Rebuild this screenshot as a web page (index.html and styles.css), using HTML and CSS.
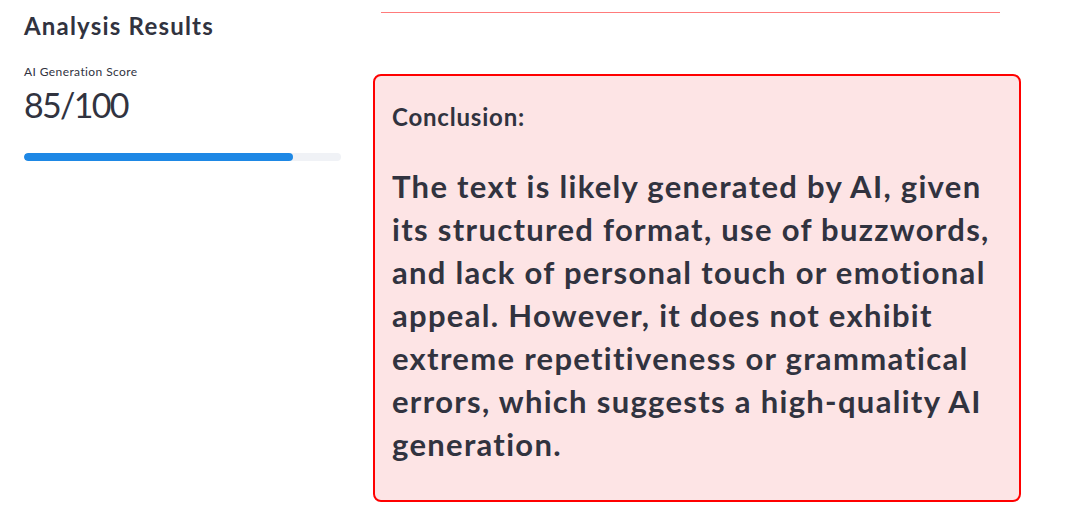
FILE: index.html
```html
<!DOCTYPE html>
<html>
<head>
    <title>Analysis Results</title>
    <meta name="viewport" content="width=device-width, initial-scale=1.0">
    <link rel="stylesheet" href="styles.css">
</head>
<body>
    <div class="columns">
        <!-- Left column: score -->
        <div class="col-left">
            <h3>Analysis Results</h3>
            <div class="metric-label">AI Generation Score</div>
            <div class="metric-value">85/100</div>
            <div class="progress">
                <div class="progress-bar" style="width: 85%"></div>
            </div>
        </div>

        <!-- Right column: conclusion -->
        <div class="col-right">
            <div class="divider"></div>
            <div class="conclusion">
                <h4>Conclusion:</h4>
                <p>The text is likely generated by AI, given its structured format, use of buzzwords, and lack of personal touch or emotional appeal. However, it does not exhibit extreme repetitiveness or grammatical errors, which suggests a high-quality AI generation.</p>
            </div>
        </div>
    </div>
</body>
</html>
```

FILE: styles.css
```css
body {
    margin: 0;
    background-color: #fff;
    color: #31333f;
    font-family: Lato, "Noto Sans", sans-serif;
}

.columns {
    display: flex;
    gap: 32px;
    padding: 0 53px 0 24px;
}

.col-left {
    width: 317px;
    flex-shrink: 0;
}

.col-right {
    flex: 1;
}

h3 {
    margin: 10px 0 0 0;
    font-size: 24px;
    font-weight: 700;
    line-height: 32px;
    letter-spacing: 1.2px;
}

.metric-label {
    margin-top: 22px;
    font-size: 12px;
    line-height: 16px;
    letter-spacing: 0.4px;
}

.metric-value {
    margin-top: 3px;
    font-size: 34px;
    line-height: 44px;
    letter-spacing: -1.7px;
}

.progress {
    margin-top: 26px;
    height: 8px;
    background-color: #f0f2f6;
    border-radius: 4px;
    overflow: hidden;
}

.progress-bar {
    height: 100%;
    background-color: #1e88e5;
    border-radius: 4px;
}

.divider {
    margin: 12px 21px 0 8px;
    border-top: 1px solid #ff7b7b;
}

.conclusion {
    margin-top: 61px;
    padding: 18px 17px 20px 17px;
    border: 2px solid #ff0000;
    border-radius: 8px;
    background-color: #fde4e5;
    box-sizing: border-box;
    height: 428px;
}

.conclusion h4 {
    margin: 8px 0 0 0;
    font-size: 24px;
    font-weight: 700;
    line-height: 30px;
    letter-spacing: 0.8px;
}

.conclusion p {
    margin: 33px 0 0 0;
    font-size: 31px;
    font-weight: 700;
    line-height: 43px;
    letter-spacing: 1.3px;
}
```
